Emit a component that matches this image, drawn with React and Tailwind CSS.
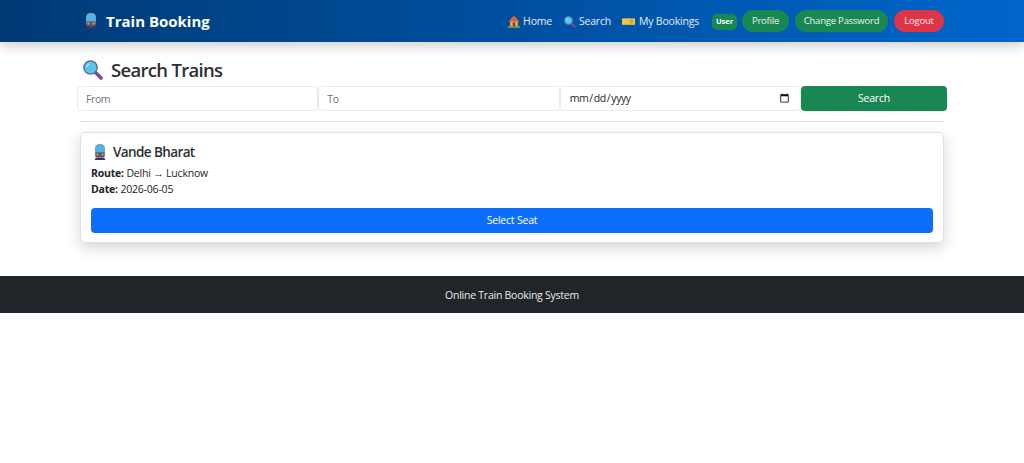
import React from 'react';

const TrainIcon = () => (
  <svg width="12" height="16" viewBox="0 0 12 16" className="shrink-0">
    <rect x="1" y="0" width="10" height="13.5" rx="4.2" fill="#8a9bb0" />
    <rect x="2" y="1.3" width="8" height="6.7" rx="3" fill="#45b8ec" />
    <rect x="1.4" y="8.4" width="9.2" height="4.6" fill="#5d5478" />
    <circle cx="3.4" cy="10.6" r="1" fill="#f0a83c" />
    <circle cx="8.6" cy="10.6" r="1" fill="#f0a83c" />
    <path d="M2 13.5h8l1.5 2.5H0.5z" fill="#3b3650" />
  </svg>
);

const SearchIcon = ({ size = 14 }) => (
  <svg width={size} height={size} viewBox="0 0 20 20" className="shrink-0">
    <path d="M12.5 12.5l5.5 5.5" stroke="#7d4a9c" strokeWidth="3.6" strokeLinecap="round" />
    <circle cx="7.5" cy="7.5" r="6.6" fill="#58c6ee" stroke="#5f7391" strokeWidth="1.5" />
    <path d="M3.6 7a4 4 0 0 1 3-3" stroke="#a9e6f8" strokeWidth="1.3" fill="none" />
  </svg>
);

const HomeIcon = () => (
  <svg width="12" height="13" viewBox="0 0 12 13" className="shrink-0">
    <rect x="0" y="11" width="12" height="2" fill="#4f9a4a" />
    <rect x="2" y="5.5" width="8" height="6" fill="#d9a06c" />
    <path d="M6 0.5L0.5 6.5h11z" fill="#e0603a" />
    <rect x="4.8" y="7.5" width="2.4" height="4" fill="#7a4526" />
  </svg>
);

const TicketIcon = () => (
  <svg width="13" height="13" viewBox="0 0 13 13" className="shrink-0">
    <rect x="0" y="3.4" width="13" height="6.4" fill="#f3c53f" />
    <rect x="7.5" y="4.8" width="3.5" height="1.6" fill="#c9962a" />
    <rect x="8.5" y="7" width="2.5" height="1.4" fill="#c9962a" />
  </svg>
);

const inputClass = 'flex-1 min-w-0 h-[25px] bg-white border border-[#e9ebee] rounded-[4px] px-2 text-[10.5px] tracking-[-0.4px] text-[#212529] placeholder:text-[#6c757d] outline-none';

export default function App() {
  return (
    <div className="min-h-[463px] bg-white text-[#212529] font-['Open_Sans','Noto_Sans',sans-serif]">
      <nav className="h-[42px] flex items-center justify-between pl-[85px] pr-[80px] bg-gradient-to-r from-[#003a75] to-[#0066cc] shadow-[0_4px_12px_rgba(0,0,0,0.2)]">
        <div className="flex items-center gap-[9px] text-white font-bold text-[15px]">
          <TrainIcon />
          <span>Train Booking</span>
        </div>
        <div className="flex items-center text-[10.5px] tracking-[-0.2px] text-white/90">
          <a className="flex items-center gap-[3px] pt-px"><HomeIcon />Home</a>
          <a className="flex items-center gap-[3px] ml-[12px] pt-px"><SearchIcon size={12} />Search</a>
          <a className="flex items-center gap-[4px] ml-[11px] pt-px"><TicketIcon />My Bookings</a>
          <span className="ml-[13px] w-[25px] text-center py-[2px] mt-[2px] rounded-[5px] bg-[#198754] text-white text-[7.5px] font-bold tracking-normal">User</span>
          <button className="ml-[5px] h-[22px] w-[47px] rounded-full bg-[#198754] text-[9.5px]">Profile</button>
          <button className="ml-[6px] h-[22px] w-[93px] rounded-full bg-[#198754] text-[9.5px]">Change Password</button>
          <button className="ml-[6px] h-[22px] w-[50px] rounded-full bg-[#dc3545] text-[9.5px]">Logout</button>
        </div>
      </nav>

      <main className="px-[77px] pt-[17px]">
        <h2 className="flex items-center gap-[8px] pl-[6px] h-[22px] text-[18.5px] font-semibold tracking-[-0.7px] text-[#2b3035]">
          <SearchIcon size={20} />
          Search Trains
        </h2>
        <form className="flex mt-[5px]">
          <input className={inputClass} placeholder="From" />
          <input className={inputClass} placeholder="To" />
          <input className={inputClass} type="date" />
          <button type="button" className="w-[146px] shrink-0 h-[25px] rounded-[4px] bg-[#198754] text-white text-[10.5px] tracking-[-0.2px]">Search</button>
        </form>
        <hr className="mx-[3px] mt-[10px] border-[#dee2e6]" />

        <div className="mx-[3px] mt-[10px] h-[111px] px-[10px] pt-[10px] bg-white border border-[#dee2e6] rounded-[6px] shadow-[0_5px_14px_rgba(0,0,0,0.17)]">
          <h5 className="flex items-center gap-[7px] pl-[3px] text-[13.5px] font-semibold tracking-[-0.6px] h-[18px] text-[#2b3035]">
            <TrainIcon />
            Vande Bharat
          </h5>
          <p className="mt-[4px] text-[10.5px] tracking-[-0.2px] leading-[16px]"><strong>Route:</strong> Delhi → Lucknow</p>
          <p className="text-[10.5px] tracking-[-0.2px] leading-[16px]"><strong>Date:</strong> 2026-06-05</p>
          <button className="mt-[11px] w-full h-[25px] rounded-[4px] bg-[#0d6efd] text-white text-[10.5px] tracking-[-0.2px]">Select Seat</button>
        </div>
      </main>

      <footer className="mt-[33px] h-[37px] pt-[2px] flex items-center justify-center bg-[#212529] text-white/90 text-[10.5px] tracking-[-0.25px]">
        Online Train Booking System
      </footer>
    </div>
  );
}
